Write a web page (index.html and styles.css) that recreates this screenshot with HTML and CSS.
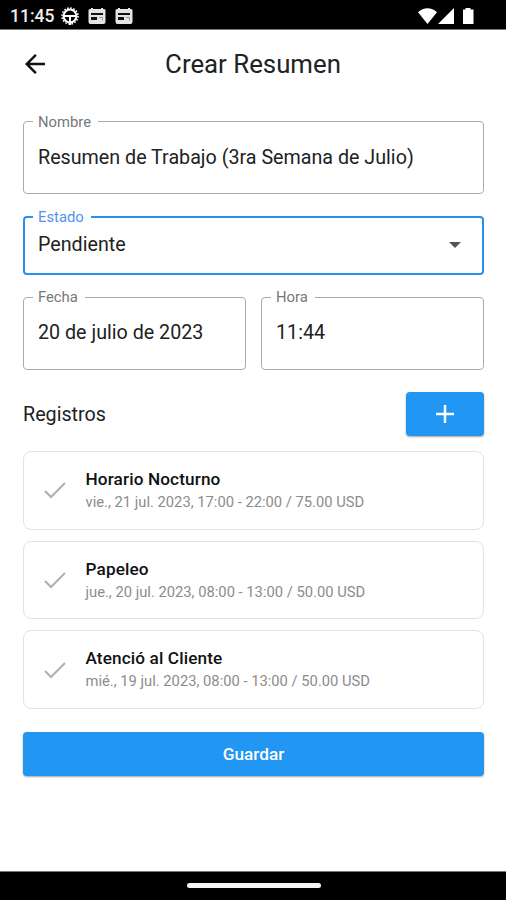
FILE: index.html
```
<!DOCTYPE html>
<html lang="es">
<head>
    <meta charset="UTF-8">
    <meta name="viewport" content="width=device-width, initial-scale=1.0">
    <title>Crear Resumen</title>
    <link rel="stylesheet" href="styles.css">
</head>
<body>
    <div class="status-bar">
        <span class="clock">11:45</span>
        <svg class="icon-gear" width="20" height="20" viewBox="0 0 20 20" fill="none" stroke="#fff">
            <circle cx="10" cy="10" r="6.4" stroke-width="2"/>
            <circle cx="10" cy="10" r="8" stroke-width="1.6" stroke-dasharray="1.6 1.54"/>
            <path d="M4 10h12M10 10v9" stroke-width="2"/>
        </svg>
        <svg class="icon-news" width="18" height="16" viewBox="0 0 18 16">
            <path d="M2 1h1V0h2v1h8V0h2v1h1a1.5 1.5 0 0 1 1.5 1.5v11.5a2 2 0 0 1-2 2h-13a2 2 0 0 1-2-2V2.5A1.5 1.5 0 0 1 2 1z" fill="#e4e4e4"/>
            <path d="M3 5h12v2H3zM3 9h6v3H3z" fill="#111"/>
            <path d="M11 9.5h3.5v3" fill="none" stroke="#999"/>
        </svg>
        <svg class="icon-news" width="18" height="16" viewBox="0 0 18 16">
            <path d="M2 1h1V0h2v1h8V0h2v1h1a1.5 1.5 0 0 1 1.5 1.5v11.5a2 2 0 0 1-2 2h-13a2 2 0 0 1-2-2V2.5A1.5 1.5 0 0 1 2 1z" fill="#e4e4e4"/>
            <path d="M3 5h12v2H3zM3 9h6v3H3z" fill="#111"/>
            <path d="M11 9.5h3.5v3" fill="none" stroke="#999"/>
        </svg>
        <svg class="icon-system" width="57" height="18" viewBox="0 0 57 18" fill="#fff">
            <path d="M0 5.2C5.5-.2 13.5-.2 19 5.2L9.500 17z"/>
            <path d="M36 1v16H20z"/>
            <path d="M45 2.5h2.500V1h5v1.500H55.500V17H45z"/>
        </svg>
    </div>

    <header class="header">
        <svg class="back" width="30" height="30" viewBox="0 0 24 24">
            <path d="M20 11H7.830l5.590-5.590L12 4l-8 8 8 8 1.410-1.410L7.830 13H20z"/>
        </svg>
        <h1>Crear Resumen</h1>
    </header>

    <main class="content">
        <div class="field">
            <span class="label">Nombre</span>
            <span class="value">Resumen de Trabajo (3ra Semana de Julio)</span>
        </div>

        <div class="field field-active">
            <span class="label">Estado</span>
            <span class="value">Pendiente</span>
            <svg class="caret" width="12" height="6" viewBox="0 0 12 6"><path d="M0 0h12L6 6z"/></svg>
        </div>

        <div class="field-row">
            <div class="field">
                <span class="label">Fecha</span>
                <span class="value">20 de julio de 2023</span>
            </div>
            <div class="field">
                <span class="label">Hora</span>
                <span class="value">11:44</span>
            </div>
        </div>

        <div class="records-head">
            <h2>Registros</h2>
            <button class="btn btn-add" aria-label="+">
                <svg width="18" height="18" viewBox="0 0 18 18"><path d="M9 0v18M0 9h18" stroke="#fff" stroke-width="2.5"/></svg>
            </button>
        </div>

        <ul class="records">
            <li>
                <svg class="check" width="22" height="17" viewBox="0 0 22 17"><path d="M1 9l6 6L21 1"/></svg>
                <div>
                    <h3>Horario Nocturno</h3>
                    <p>vie., 21 jul. 2023, 17:00 - 22:00 / 75.00 USD</p>
                </div>
            </li>
            <li>
                <svg class="check" width="22" height="17" viewBox="0 0 22 17"><path d="M1 9l6 6L21 1"/></svg>
                <div>
                    <h3>Papeleo</h3>
                    <p>jue., 20 jul. 2023, 08:00 - 13:00 / 50.00 USD</p>
                </div>
            </li>
            <li>
                <svg class="check" width="22" height="17" viewBox="0 0 22 17"><path d="M1 9l6 6L21 1"/></svg>
                <div>
                    <h3>Atenció al Cliente</h3>
                    <p>mié., 19 jul. 2023, 08:00 - 13:00 / 50.00 USD</p>
                </div>
            </li>
        </ul>

        <button class="btn btn-save">Guardar</button>
    </main>

    <div class="nav-bar"><span class="handle"></span></div>
</body>
</html>
```
FILE: styles.css
```
* {
    box-sizing: border-box;
}
body {
    margin: 0;
    height: 900px;
    display: flex;
    flex-direction: column;
    font-family: Roboto, sans-serif;
    background-color: #fff;
    color: #222;
    overflow: hidden;
}
h1, h2, h3, p, ul {
    margin: 0;
    padding: 0;
    font-weight: 400;
}

/* system bars */
.status-bar {
    height: 30px;
    display: flex;
    align-items: center;
    padding: 2px 31px 0 10px;
    background-color: #000;
    border-bottom: 1px solid #777;
    color: #eee;
}
.clock {
    width: 50px;
    font-size: 17.5px;
    font-weight: 500;
}
.icon-gear {
    margin-right: 8px;
}
.icon-news {
    margin-right: 9px;
}
.icon-system {
    margin-left: auto;
}
.nav-bar {
    height: 29px;
    margin-top: auto;
    display: flex;
    align-items: center;
    justify-content: center;
    padding: 0 0 1px 1px;
    background-color: #000;
    border-top: 1px solid #777;
}
.handle {
    width: 134px;
    height: 5px;
    border-radius: 3px;
    background-color: #f4f4f4;
}

.header {
    height: 68px;
    display: grid;
    grid-template-columns: 30px 1fr 30px;
    align-items: center;
    padding: 0 20px;
}
.back {
    fill: #111;
}
h1 {
    padding-bottom: 1px;
    text-align: center;
    font-size: 25.8px;
}

/* form */
.content {
    display: flex;
    flex-direction: column;
    padding: 23px 22px 0 23px;
}
.field {
    position: relative;
    flex: 1;
    display: flex;
    align-items: center;
    min-height: 73px;
    padding: 0 14px 1px;
    border: 1px solid #aaa;
    border-radius: 4px;
}
.label {
    position: absolute;
    top: -8px;
    left: 9px;
    padding: 0 7px 0 5px;
    background-color: #fff;
    color: #777;
    font-size: 14.8px;
    line-height: 17px;
}
.value {
    font-size: 19.7px;
}
.field-active {
    min-height: 59px;
    margin: 22px 0;
    padding: 0 21px 2px 13px;
    border: 2px solid #2b8fec;
}
.field-active .label {
    top: -9px;
    left: 8px;
    color: #4c94ee;
}
.caret {
    margin-left: auto;
    fill: #555;
}
.field-row {
    display: flex;
    gap: 15px;
}
.field-row .field {
    padding-bottom: 2px;
}
.field-row .label {
    top: -9px;
}

/* records */
.records-head {
    display: flex;
    justify-content: space-between;
    align-items: center;
    margin: 22px 0 15px;
}
h2 {
    font-size: 19.7px;
}
.btn {
    height: 44px;
    border: none;
    border-radius: 4px;
    background-color: #2196f3;
    color: #fff;
    font-family: inherit;
    box-shadow: 0 1px 2px rgba(0,0,0,0.35);
}
.btn-add {
    width: 78px;
    padding: 0;
    display: flex;
    align-items: center;
    justify-content: center;
}
.records {
    display: flex;
    flex-direction: column;
    gap: 11px;
    list-style: none;
}
.records li {
    display: flex;
    align-items: center;
    height: 78.7px;
    padding: 1px 20px 0;
    border: 1px solid #e2e2e2;
    border-radius: 8px;
}
.check {
    margin-right: 19.5px;
    fill: none;
    stroke: #b0b0b0;
    stroke-width: 2;
}
h3 {
    color: #111;
    font-size: 17.2px;
    font-weight: 500;
    line-height: 23px;
    letter-spacing: 0.12px;
}
.records p {
    color: #8c8c8c;
    font-size: 14.75px;
    line-height: 23px;
}
.btn-save {
    margin-top: 23px;
    font-size: 17.2px;
    font-weight: 500;
}
```
